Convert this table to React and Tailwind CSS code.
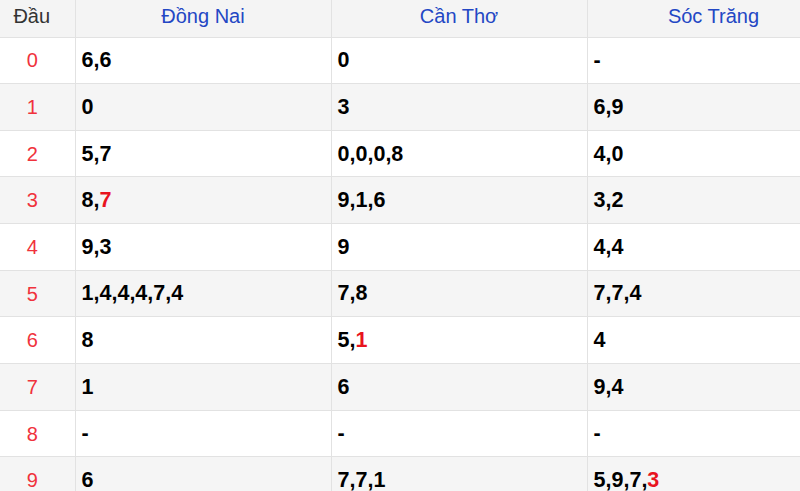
import React from 'react';

const rows = [
  ['6,6', '0', '-'],
  ['0', '3', '6,9'],
  ['5,7', '0,0,0,8', '4,0'],
  ['8,*7', '9,1,6', '3,2'],
  ['9,3', '9', '4,4'],
  ['1,4,4,4,7,4', '7,8', '7,7,4'],
  ['8', '5,*1', '4'],
  ['1', '6', '9,4'],
  ['-', '-', '-'],
  ['6', '7,7,1', '5,9,7,*3'],
];

const provinces = ['Đồng Nai', 'Cần Thơ', 'Sóc Trăng'];

// "*" marks the special (red) number
const Cell = ({ value }) => {
  const parts = value.split(',');
  return (
    <span>
      {parts.map((p, i) => (
        <React.Fragment key={i}>
          {i > 0 && ','}
          {p.startsWith('*') ? <span className="text-[#e8141e]">{p.slice(1)}</span> : p}
        </React.Fragment>
      ))}
    </span>
  );
};

const App = () => {
  return (
    <div className="w-[800px] h-[491px] overflow-hidden bg-white" style={{ fontFamily: '"Liberation Sans", Arial, sans-serif' }}>
      <table className="w-[840px] border-collapse table-fixed">
        <colgroup>
          <col className="w-[75px]" />
          <col className="w-[256px]" />
          <col className="w-[256px]" />
          <col className="w-[253px]" />
        </colgroup>
        <thead>
          <tr className="h-[37px] bg-[#f4f4f4]">
            <th className="border border-t-0 border-l-0 border-[#e2e2e2] font-normal text-[20px] text-[#333] text-center pr-[11px] pb-[5px]">Đầu</th>
            {provinces.map((p) => (
              <th key={p} className="border border-t-0 border-[#e2e2e2] font-normal text-[20px] text-[#2347c4] text-center pb-[5px]">
                {p}
              </th>
            ))}
          </tr>
        </thead>
        <tbody>
          {rows.map((r, i) => (
            <tr key={i} className={`h-[46.67px] ${i % 2 === 1 ? 'bg-[#f5f5f5]' : 'bg-white'}`}>
              <td className="border border-l-0 border-[#e2e2e2] text-center pr-[10px] text-[20px] text-[#f0323c]">{i}</td>
              {r.map((v, j) => (
                <td key={j} className="border border-[#e2e2e2] pl-[6px] text-[21.5px] font-bold text-black">
                  <Cell value={v} />
                </td>
              ))}
            </tr>
          ))}
        </tbody>
      </table>
    </div>
  );
};

export default App;
